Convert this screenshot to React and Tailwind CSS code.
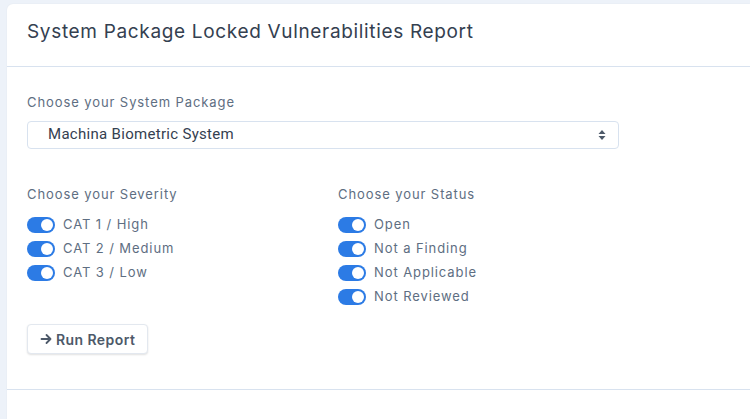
const severities = ["CAT 1 / High", "CAT 2 / Medium", "CAT 3 / Low"];
const statuses = ["Open", "Not a Finding", "Not Applicable", "Not Reviewed"];

function Toggle({ label }) {
  return (
    <label className="flex h-6 items-center gap-2">
      <span className="relative h-4 w-7 rounded-full bg-[#2c7be5]">
        <span className="absolute right-[2px] top-[2px] h-3 w-3 rounded-full bg-white" />
      </span>
      <span className="text-[13px] tracking-[0.07em] text-[#5e6e82]">{label}</span>
    </label>
  );
}

export default function App() {
  return (
    <div
      className="h-[419px] overflow-hidden bg-[#edf2f9] pl-[7px] pt-1"
      style={{ fontFamily: "Inter, 'Open Sans', sans-serif" }}
    >
      <div className="h-[500px] rounded-tl-md bg-white shadow-[0_0_2px_rgba(0,0,0,0.06)]">
        <div className="h-[63px] border-b border-[#d8e2ef] px-5 pt-[16px]">
          <h1 className="text-[19px] leading-6 tracking-[0.035em] text-[#344050]">
            System Package Locked Vulnerabilities Report
          </h1>
        </div>
        <div className="border-b border-[#d8e2ef] px-5 pb-[35px] pt-[26px]">
          <p className="text-[13px] tracking-[0.07em] text-[#5e6e82]">Choose your System Package</p>
          <div className="mt-[8px] flex h-[28px] w-[592px] items-center justify-between rounded border border-[#d8e2ef] pl-5 pr-3">
            <span className="text-[15px] tracking-[0.02em] text-[#344050]" style={{ fontFamily: "Roboto, sans-serif" }}>
              Machina Biometric System
            </span>
            <svg width="8" height="12" viewBox="0 0 8 12" fill="#4d5969">
              <path d="M4 1 L7.5 5 H0.5 Z" />
              <path d="M4 11 L7.5 7 H0.5 Z" />
            </svg>
          </div>
          <div className="mt-[36px] flex">
            <div className="w-[311px]">
              <p className="text-[13px] tracking-[0.07em] text-[#5e6e82]">Choose your Severity</p>
              <div className="mt-[9px] flex flex-col">
                {severities.map((s) => (
                  <Toggle key={s} label={s} />
                ))}
              </div>
            </div>
            <div>
              <p className="text-[13px] tracking-[0.07em] text-[#5e6e82]">Choose your Status</p>
              <div className="mt-[9px] flex flex-col">
                {statuses.map((s) => (
                  <Toggle key={s} label={s} />
                ))}
              </div>
            </div>
          </div>
          <button className="mt-[15px] flex h-[30px] items-center gap-1 rounded border border-[#e3e8ef] bg-white px-3 text-[14px] font-semibold tracking-[0.03em] text-[#4d5969] shadow-[0_1px_2px_rgba(0,0,0,0.12)]">
            <svg width="12" height="12" viewBox="0 0 12 12" fill="none" stroke="currentColor" strokeWidth="1.8" strokeLinecap="round" strokeLinejoin="round">
              <path d="M1.5 6 H10.5 M6.5 2 L10.5 6 L6.5 10" />
            </svg>
            Run Report
          </button>
        </div>
      </div>
    </div>
  );
}
